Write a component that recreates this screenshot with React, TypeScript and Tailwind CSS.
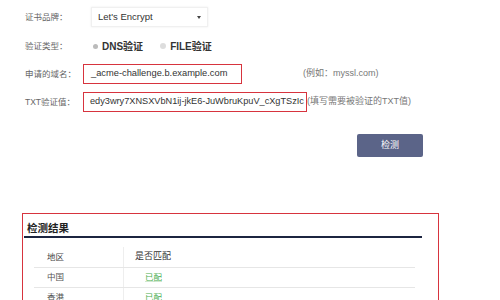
const font = { fontFamily: '"Liberation Sans", "Noto Sans CJK SC", sans-serif' };

function Row({ label, children, className }: { label: string; children: React.ReactNode; className?: string }) {
    return (
        <div className={`flex items-center h-[20px] ${className ?? ""}`}>
            <span className="w-[58px] shrink-0 text-[8.5px] text-[#666]">{label}</span>
            {children}
        </div>
    );
}

export default function App() {
    const rows = [
        { region: "中国", match: "已配" },
        { region: "香港", match: "已配" },
    ];

    return (
        <main className="w-[500px] h-[300px] bg-white overflow-hidden pl-[25px] relative" style={font}>
            <Row label="证书品牌：" className="mt-[7px]">
                <div className="ml-[8px] w-[117px] h-[20px] flex items-center justify-between px-[6px] bg-white border border-[#f0f0f0] shadow-[0_0_2px_rgba(0,0,0,0.08)]">
                    <span className="text-[9.5px] text-[#333]">Let's Encrypt</span>
                    <span className="w-0 h-0 border-l-[2.5px] border-r-[2.5px] border-t-[3px] border-l-transparent border-r-transparent border-t-[#444]"></span>
                </div>
            </Row>

            <Row label="验证类型：" className="mt-[9px]">
                <div className="ml-[10px] flex items-center gap-[4px]">
                    <span className="w-[5px] h-[5px] rounded-full bg-[#bbb]"></span>
                    <span className="text-[10px] font-semibold text-[#333]">DNS验证</span>
                </div>
                <div className="ml-[17px] flex items-center gap-[4px]">
                    <span className="w-[6px] h-[6px] rounded-full bg-[#ddd]"></span>
                    <span className="text-[10px] font-semibold text-[#333]">FILE验证</span>
                </div>
            </Row>

            <Row label="申请的域名：" className="mt-[8px]">
                <div className="w-[159px] h-[20px] border-[1.5px] border-[#d7343e] flex items-center pl-[7px]">
                    <span className="text-[9.3px] text-[#333]">_acme-challenge.b.example.com</span>
                </div>
                <span className="ml-[61px] text-[9px] text-[#777]">(例如：myssl.com)</span>
            </Row>

            <Row label="TXT验证值：" className="mt-[8px]">
                <div className="w-[224px] shrink-0 h-[20px] border-[1.5px] border-[#d7343e] flex items-center pl-[6px] whitespace-nowrap overflow-hidden">
                    <span className="text-[9.2px] text-[#333]">edy3wry7XNSXVbN1ij-jkE6-JuWbruKpuV_cXgTSzIc</span>
                </div>
                <span className="text-[9px] text-[#777] whitespace-nowrap">(填写需要被验证的TXT值)</span>
            </Row>

            <div className="mt-[22px] ml-[332px] w-[66px] h-[23px] rounded-[2px] bg-[#5b6488] flex items-center justify-center">
                <span className="text-[9px] text-white">检测</span>
            </div>

            <section className="mt-[56px] -ml-[3px] w-[417px] h-[120px] border-[1.5px] border-[#d7343e]">
                <h2 className="pl-[4px] pt-[7px] h-[22px] text-[10.5px] font-bold text-[#222] leading-[14px]">检测结果</h2>
                <div className="ml-[1px] w-[398px] h-[2px] bg-[#1c2540]"></div>
                <div className="ml-[11px] w-[381px] mt-[9px] text-[8.5px]">
                    <div className="flex h-[21px] items-center border-b border-[#e6e6e6]">
                        <span className="w-[89px] pl-[13px] text-[#444]">地区</span>
                        <span className="h-full border-l border-[#eee]"></span>
                        <span className="pl-[11px] text-[9px] text-[#333]">是否匹配</span>
                    </div>
                    {rows.map((r) => (
                        <div key={r.region} className="flex h-[20px] items-center border-b border-[#e6e6e6]">
                            <span className="w-[89px] pl-[13px] text-[#555]">{r.region}</span>
                            <span className="h-full border-l border-[#eee]"></span>
                            <span className="pl-[21px] text-[#4caf50] underline decoration-[#cfe8cf]">{r.match}</span>
                        </div>
                    ))}
                </div>
            </section>
        </main>
    );
}
